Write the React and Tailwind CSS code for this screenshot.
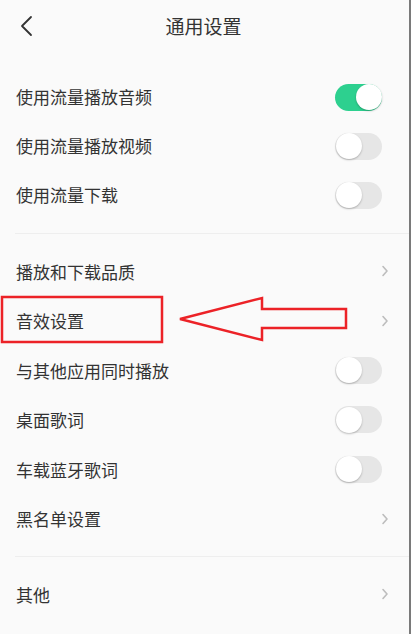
import React, { useState } from "react";

function Toggle({ on }) {
  return (
    <div
      className={
        "relative h-[27px] w-[47px] rounded-full " +
        (on ? "bg-[#2dd08f]" : "bg-[#e6e6e6]")
      }
    >
      <div
        className={
          "absolute top-[0.5px] h-[26px] w-[26px] rounded-full bg-white shadow-[0_1px_2px_rgba(0,0,0,0.25)] " +
          (on ? "left-[20.5px]" : "left-[0.5px]")
        }
      />
    </div>
  );
}

function Chevron() {
  return (
    <svg width="8" height="12" viewBox="0 0 8 12" className="mr-[20px]">
      <path d="M2 1.5 L6 6 L2 10.5" fill="none" stroke="#bdbdbd" strokeWidth="1.6" strokeLinecap="round" strokeLinejoin="round" />
    </svg>
  );
}

function Row({ label, right, tall }) {
  return (
    <div className={"flex items-center justify-between pl-4 " + (tall ? "h-[49.5px]" : "h-[49px]")}>
      <span className="text-[17px] text-[#333]">{label}</span>
      {right}
    </div>
  );
}

export default function App() {
  const [toggles] = useState({ audio: true, video: false, download: false, mix: false, lyric: false, car: false });

  return (
    <div
      className="relative h-[634px] w-[411px] overflow-hidden border-r-2 border-[#7a7a7a] bg-[#fafafa]"
      style={{ fontFamily: '"Noto Sans CJK SC", "Noto Sans", sans-serif' }}
    >
      {/* 顶栏 */}
      <div className="relative flex h-[52px] items-center justify-center">
        <svg width="14" height="22" viewBox="0 0 14 22" className="absolute left-[19px] top-[15px]">
          <path d="M12 2 L3 11 L12 20" fill="none" stroke="#333" strokeWidth="1.8" strokeLinecap="round" strokeLinejoin="round" />
        </svg>
        <h1 className="-ml-[2px] text-[19px] text-[#333]">通用设置</h1>
      </div>

      <div className="pt-[20.5px]">
        <Row label="使用流量播放音频" right={<div className="mr-[27px]"><Toggle on={toggles.audio} /></div>} />
        <Row label="使用流量播放视频" right={<div className="mr-[27px]"><Toggle on={toggles.video} /></div>} />
        <Row label="使用流量下载" right={<div className="mr-[27px]"><Toggle on={toggles.download} /></div>} />
      </div>

      <div className="ml-[15px] mt-[13px] h-px bg-[#eeeeee]" />

      <div className="pt-[13px]">
        <Row tall label="播放和下载品质" right={<Chevron />} />
        <Row tall label="音效设置" right={<Chevron />} />
        <Row tall label="与其他应用同时播放" right={<div className="mr-[27px]"><Toggle on={toggles.mix} /></div>} />
        <Row tall label="桌面歌词" right={<div className="mr-[27px]"><Toggle on={toggles.lyric} /></div>} />
        <Row tall label="车载蓝牙歌词" right={<div className="mr-[27px]"><Toggle on={toggles.car} /></div>} />
        <Row tall label="黑名单设置" right={<Chevron />} />
      </div>

      <div className="ml-[15px] mt-[12px] h-px bg-[#eeeeee]" />

      <div className="pt-[13px]">
        <Row tall label="其他" right={<Chevron />} />
      </div>

      {/* 红色标注 */}
      <svg className="pointer-events-none absolute left-0 top-0" width="411" height="634">
        <rect x="2" y="297" width="160" height="45" fill="none" stroke="#ec2227" strokeWidth="2.5" />
        <path
          d="M180 319 L262 298 L262 309 L346 309 L346 328 L262 328 L262 340 Z"
          fill="none"
          stroke="#ec2227"
          strokeWidth="2.5"
          strokeLinejoin="miter"
        />
      </svg>
    </div>
  );
}
